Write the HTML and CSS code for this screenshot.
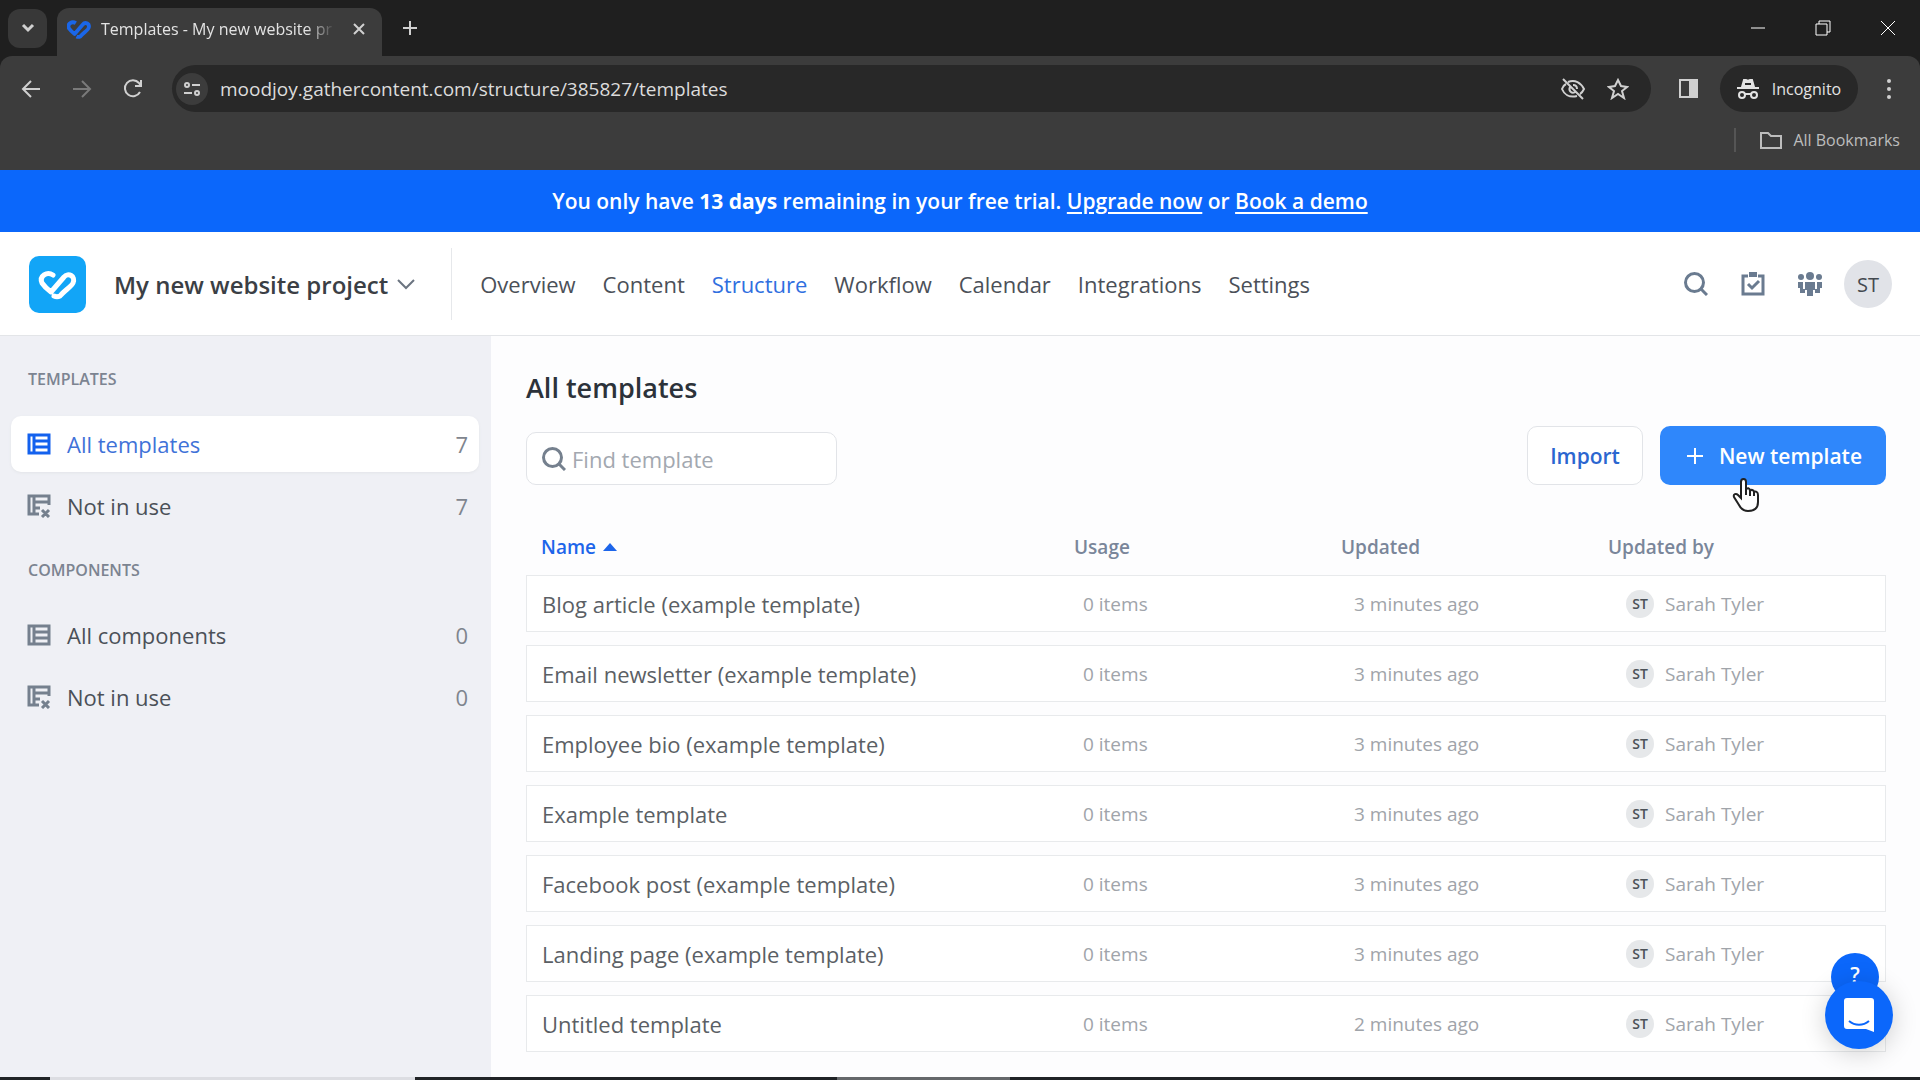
FILE: index.html
```html
<!DOCTYPE html>
<html lang="en">
<head>
<meta charset="utf-8">
<title>Templates - My new website project</title>
<link rel="stylesheet" href="styles.css">
</head>
<body>
<svg class="defs" aria-hidden="true">
  <symbol id="heart" viewBox="0 0 57 57"><path d="M24 19C18 15 10 20 13 27C15 30 18 33 22 36L35 21C39 16 47 20 44 27C43 30 35 35 31 40C29 41 27 41 25 40"/></symbol>
  <symbol id="search" viewBox="0 0 24 24"><circle cx="10.500" cy="10.500" r="9"/><path d="M17 17l6 6"/></symbol>
  <symbol id="list" viewBox="0 0 24 22"><path d="M2 2h20v18H2zM7 2v18M7 8h15M7 14h15"/></symbol>
  <symbol id="unused" viewBox="0 0 24 24"><path d="M22 11V2H2v18h10M7 2v18M7 8h15M7 14h6M15 16l7 7M22 16l-7 7"/></symbol>
</svg>

<header class="browser">
  <div class="tabstrip">
    <button class="tab-search" aria-label="Search tabs"><svg width="14" height="10" viewBox="0 0 14 10"><path d="M2 2l5 5 5-5"/></svg></button>
    <div class="tab">
      <svg class="favicon" viewBox="10 14 38 30"><use href="#heart" width="57" height="57"/></svg>
      <span class="tab-title">Templates - My new website pr</span>
      <button class="tab-close" aria-label="Close tab"><svg width="14" height="14" viewBox="0 0 14 14"><path d="M2 2l10 10M12 2L2 12"/></svg></button>
    </div>
    <button class="tab-new" aria-label="New tab"><svg width="16" height="16" viewBox="0 0 16 16"><path d="M8 1v14M1 8h14"/></svg></button>
    <div class="window-controls">
      <button aria-label="Minimize"><svg width="16" height="16" viewBox="0 0 16 16"><path d="M1 8h14"/></svg></button>
      <button aria-label="Restore"><svg width="16" height="16" viewBox="0 0 16 16"><path d="M1 4h11v11H1zM4 4V1h11v11h-3"/></svg></button>
      <button aria-label="Close"><svg width="16" height="16" viewBox="0 0 16 16"><path d="M1 1l14 14M15 1L1 15"/></svg></button>
    </div>
  </div>
  <div class="toolbar">
    <button class="tool" aria-label="Back"><svg width="20" height="18" viewBox="0 0 20 18"><path d="M19 9H3M10 1L2 9l8 8"/></svg></button>
    <button class="tool dim" aria-label="Forward"><svg width="20" height="18" viewBox="0 0 20 18"><path d="M1 9h16M10 1l8 8-8 8"/></svg></button>
    <button class="tool" aria-label="Reload"><svg width="20" height="20" viewBox="0 0 20 20"><path d="M17 13a8 8 0 1 1-1-9l2 3M18 1v6h-6"/></svg></button>
    <div class="omnibox">
      <button class="site-info" aria-label="Site information"><svg width="18" height="16" viewBox="0 0 18 16"><circle cx="4" cy="4" r="2"/><path d="M9 4h8M1 12h8"/><circle cx="14" cy="12" r="2"/></svg></button>
      <input class="url" type="text" aria-label="Address" value="moodjoy.gathercontent.com/structure/385827/templates">
      <button class="omni-icon" aria-label="Third-party cookies blocked"><svg width="26" height="22" viewBox="0 0 26 22"><path d="M8 4c7-3 13 1 16 7-1 2-2 4-4 5M17 18C9 20 4 16 2 11c1-3 2-4 4-5M3 1l20 20M10 9c-2 4 2 7 5 5M13 7c3 0 4 2 4 4"/></svg></button>
      <button class="omni-icon" aria-label="Bookmark this tab"><svg width="22" height="22" viewBox="0 0 22 22"><path d="M11 2l3 6 6 1-5 4 2 7-6-4-6 4 2-7-5-4 6-1z"/></svg></button>
    </div>
    <button class="tool panel" aria-label="Side panel"><svg width="21" height="21" viewBox="0 0 21 21"><path d="M2 2h17v17H2z"/><path d="M12 2h7v17h-7z" fill="currentColor"/></svg></button>
    <button class="incognito"><svg width="22" height="20" viewBox="0 0 22 20"><path d="M0 9h22M8 15h6"/><path d="M5 8l2-7h2l2 1 2-1h2l2 7z"/><circle cx="5" cy="16" r="3"/><circle cx="17" cy="16" r="3"/><path d="M8 5h6" class="band"/></svg>Incognito</button>
    <button class="menu" aria-label="Menu"><svg width="6" height="22" viewBox="0 0 6 22"><circle cx="3" cy="3" r="2"/><circle cx="3" cy="11" r="2"/><circle cx="3" cy="19" r="2"/></svg></button>
  </div>
  <div class="bookmarks">
    <button class="all-bookmarks"><svg width="24" height="19" viewBox="0 0 24 19"><path d="M2 2h7l3 3h10v12H2z"/></svg>All Bookmarks</button>
  </div>
</header>

<div class="trial">You only have <b>13 days</b> remaining in your free trial. <a href="#upgrade">Upgrade now</a> or <a href="#demo">Book a demo</a></div>

<header class="app-header">
  <a class="logo" href="#home" aria-label="Home"><svg><use href="#heart"/></svg></a>
  <button class="project">My new website project<svg width="18" height="12" viewBox="0 0 18 12"><path d="M1 2l8 8 8-8"/></svg></button>
  <nav class="nav">
    <a href="#overview">Overview</a><a href="#content">Content</a><a class="current" href="#structure">Structure</a><a href="#workflow">Workflow</a><a href="#calendar">Calendar</a><a href="#integrations">Integrations</a><a href="#settings">Settings</a>
  </nav>
  <div class="header-tools">
    <button aria-label="Search"><svg class="ico-line"><use href="#search"/></svg></button>
    <button aria-label="Tasks"><svg class="ico-line" viewBox="0 0 24 24"><path d="M7 4H2v18h20V4h-5M7 12l4 4 7-7"/><path class="solid" d="M8 0h8v5H8z"/></svg></button>
    <button aria-label="People"><svg class="ico-fill" viewBox="0 0 24 24"><circle cx="12" cy="4" r="4"/><circle cx="3" cy="5" r="3"/><circle cx="21" cy="5" r="3"/><path d="M7 10h10v8h-2v6H9v-6H7zM0 10h5v7h2v4H2v-5H0zM24 10h-5v7h-2v4h5v-5h2z"/></svg></button>
    <button class="avatar-lg" aria-label="Account">ST</button>
  </div>
</header>

<div class="app">
  <aside class="sidebar">
    <h2>Templates</h2>
    <a class="item active" href="#all"><svg><use href="#list"/></svg>All templates<span>7</span></a>
    <a class="item" href="#unused-templates"><svg><use href="#unused"/></svg>Not in use<span>7</span></a>
    <h2 class="second">Components</h2>
    <a class="item" href="#components"><svg><use href="#list"/></svg>All components<span>0</span></a>
    <a class="item" href="#unused-components"><svg><use href="#unused"/></svg>Not in use<span>0</span></a>
  </aside>

  <main class="main">
    <h1>All templates</h1>
    <div class="actions">
      <label class="find"><svg><use href="#search"/></svg><input type="text" aria-label="Find template" placeholder="Find template"></label>
      <button class="import">Import</button>
      <button class="new"><svg width="18" height="18" viewBox="0 0 18 18"><path d="M9 1v16M1 9h16"/></svg>New template
        <svg class="pointer" width="28" height="36" viewBox="0 0 28 36"><path d="M9 20V4c0-4 5-4 5 0v8c1-3 4-2 4 1 1-2 4-1 4 1 2-1 4 0 4 3v7c0 6-4 9-10 9-5 0-7-2-9-6l-5-8c-1-3 2-4 4-2z"/><path d="M14 12v5M18 13v5M22 14v4"/></svg>
      </button>
    </div>
    <table class="templates">
      <thead><tr><th class="c-name sorted"><button>Name<i></i></button></th><th class="c-usage">Usage</th><th class="c-updated">Updated</th><th class="c-by">Updated by</th></tr></thead>
      <tbody>
        <tr><td><a href="#t1">Blog article (example template)</a></td><td>0 items</td><td>3 minutes ago</td><td><span class="avatar">ST</span>Sarah Tyler</td></tr>
        <tr><td><a href="#t2">Email newsletter (example template)</a></td><td>0 items</td><td>3 minutes ago</td><td><span class="avatar">ST</span>Sarah Tyler</td></tr>
        <tr><td><a href="#t3">Employee bio (example template)</a></td><td>0 items</td><td>3 minutes ago</td><td><span class="avatar">ST</span>Sarah Tyler</td></tr>
        <tr><td><a href="#t4">Example template</a></td><td>0 items</td><td>3 minutes ago</td><td><span class="avatar">ST</span>Sarah Tyler</td></tr>
        <tr><td><a href="#t5">Facebook post (example template)</a></td><td>0 items</td><td>3 minutes ago</td><td><span class="avatar">ST</span>Sarah Tyler</td></tr>
        <tr><td><a href="#t6">Landing page (example template)</a></td><td>0 items</td><td>3 minutes ago</td><td><span class="avatar">ST</span>Sarah Tyler</td></tr>
        <tr><td><a href="#t7">Untitled template</a></td><td>0 items</td><td>2 minutes ago</td><td><span class="avatar">ST</span>Sarah Tyler</td></tr>
      </tbody>
    </table>
  </main>
</div>

<footer class="taskbar"><span class="light"></span><span class="grey"></span></footer>

<div class="help">
  <button class="help-small" aria-label="Help">?</button>
  <button class="help-chat" aria-label="Open chat"><svg width="32" height="36" viewBox="0 0 32 36"><path class="bubble" d="M4 1h24a3 3 0 0 1 3 3v31l-8-3H4a3 3 0 0 1-3-3V4a3 3 0 0 1 3-3z"/><path class="smile" d="M6 24c6 5 14 5 20 0"/></svg></button>
</div>
</body>
</html>
```
FILE: styles.css
```css
* { box-sizing: border-box; }
body {
  margin: 0;
  min-height: 100vh;
  display: flex;
  flex-direction: column;
  background: #fdfdfe;
  font-family: "Open Sans", sans-serif;
  color: #4b5058;
}
button, input { font: inherit; color: inherit; border: 0; background: none; padding: 0; margin: 0; }
button { display: flex; align-items: center; justify-content: center; }
a { color: inherit; text-decoration: none; }
h1, h2 { margin: 0; }
svg { display: block; flex: none; fill: none; stroke: currentColor; stroke-width: 2; }
.defs { position: absolute; width: 0; height: 0; }

/* Browser window */
.browser { background: #1f1f1f; color: #d0d0d0; }
.tabstrip { display: flex; align-items: center; height: 56px; padding-left: 8px; }
.tab-search { width: 39px; height: 39px; border-radius: 12px; background: #383838; }
.tab-search svg { stroke-width: 3; }
.tab {
  display: flex; align-items: center; align-self: flex-end;
  width: 325px; height: 48px; margin-left: 10px; padding: 0 9px 6px 10px;
  border-radius: 12px 12px 0 0; background: #3c3c3c;
}
.favicon { width: 24px; height: 19px; color: #1a66e8; stroke-width: 6; stroke-linejoin: round; }
.tab-title {
  flex: 1; margin-left: 10px; white-space: nowrap;
  font-size: 16px; line-height: 24px; color: #e3e3e3;
  -webkit-mask-image: linear-gradient(to right, #000 88%, transparent);
  mask-image: linear-gradient(to right, #000 88%, transparent);
}
.tab-close { width: 28px; height: 28px; margin-left: 10px; }
.tab-new { width: 40px; height: 40px; margin-left: 8px; }
.window-controls { display: flex; margin-left: auto; }
.window-controls button { width: 65px; height: 56px; color: #fff; }
.window-controls svg { stroke-width: 1; }
.toolbar {
  display: flex; align-items: center; height: 65px; padding-left: 5px;
  background: #3c3c3c; border-radius: 12px 12px 0 0;
}
.tool { width: 51px; height: 40px; }
.dim { color: #7a7a7a; }
.omnibox {
  flex: 1; display: flex; align-items: center; height: 47px;
  margin-left: 14px; padding: 0 20px 0 4px; border-radius: 24px; background: #282828;
}
.site-info { width: 32px; height: 32px; border-radius: 50%; background: #3c3c3c; }
.url { flex: 1; min-width: 0; margin-left: 12px; font-size: 19px; color: #dcdcdc; }
.omni-icon { width: 45px; height: 40px; }
.omni-icon:last-child { width: 26px; margin-left: 10px; }
.panel { margin: 0 6px 0 12px; }
.incognito { gap: 13px; width: 138px; height: 47px; border-radius: 24px; background: #282828; font-size: 16px; color: #e3e3e3; }
.incognito path:nth-of-type(2) { fill: currentColor; }
.incognito .band { stroke: #282828; }
.menu { width: 62px; height: 40px; }
.menu svg { fill: currentColor; stroke: none; }
.bookmarks { display: flex; justify-content: flex-end; height: 49px; padding: 7px 20px 0 0; background: #3c3c3c; }
.all-bookmarks { gap: 10px; height: 24px; padding-left: 23px; border-left: 2px solid #555; font-size: 16px; color: #bdbdbd; }

/* Trial banner */
.trial {
  padding: 16px 24px; background: #0b67fb; color: #fff;
  font-size: 21px; line-height: 30px; font-weight: 600; text-align: center;
}
.trial b { font-weight: 700; }
.trial a { text-decoration: underline; text-underline-offset: 3px; }

/* Application header */
.app-header { display: flex; align-items: center; padding: 16px 28px 15px 29px; background: #fff; border-bottom: 1px solid #e3e5e8; }
.logo { display: block; border-radius: 10px; background: #12a5f7; color: #fff; }
.logo svg { width: 57px; height: 57px; stroke-width: 5; stroke-linecap: round; stroke-linejoin: round; }
.project { gap: 9px; margin-left: 28px; font-size: 24px; font-weight: 600; color: #3b3f45; white-space: nowrap; }
.project svg { color: #6b7480; }
.nav { display: flex; align-items: center; gap: 27px; height: 72px; margin-left: 36px; padding-left: 28px; border-left: 1px solid #e6e8eb; font-size: 22px; line-height: 30px; }
.current { color: #2f6fdf; }
.header-tools { display: flex; align-items: center; gap: 33px; margin-left: auto; color: #6a7b90; }
.ico-line, .ico-fill { width: 24px; height: 24px; }
.ico-line { stroke-width: 3; }
.ico-fill, .solid { fill: currentColor; stroke: none; }
.avatar-lg { width: 48px; height: 48px; margin-left: -11px; border-radius: 50%; background: #e1e3e8; font-size: 20px; color: #43494f; }

/* Sidebar */
.app { flex: 1; display: flex; }
.sidebar { display: flex; flex-direction: column; width: 491px; flex: none; padding: 33px 12px 0 11px; background: #eff0f5; }
.sidebar h2 { margin: 0 0 27px 17px; font-size: 16px; line-height: 20px; font-weight: 600; color: #7c8491; text-transform: uppercase; }
.sidebar .second { margin-top: 26px; }
.item { display: flex; align-items: center; height: 56px; padding: 0 11px 0 16px; border-radius: 10px; font-size: 22px; }
.item + .item { margin-top: 6px; }
.item svg { width: 24px; height: 24px; margin-right: 16px; color: #75808e; stroke-width: 3; }
.item span { margin-left: auto; color: #7f858e; }
.active { background: #fff; color: #3f72d8; box-shadow: 0 1px 3px #e3e4e8; }
.active svg { color: #1361ee; }

/* Template list */
.main { flex: 1; min-width: 0; padding: 34px 34px 10px 35px; }
h1 { font-size: 27px; line-height: 36px; font-weight: 600; color: #2c323a; }
.actions { display: flex; align-items: flex-end; margin-top: 20px; }
.find { display: flex; align-items: center; gap: 6px; width: 311px; height: 53px; margin-right: auto; padding: 0 15px; border: 1px solid #e2e4e8; border-radius: 10px; background: #fff; font-size: 22px; }
.find svg { width: 24px; height: 24px; stroke-width: 3; color: #75808e; }
.find input { width: 100%; min-width: 0; }
.find input::placeholder { color: #a3a8b0; opacity: 1; }
.import, .new { height: 59px; border-radius: 10px; font-size: 21px; font-weight: 600; }
.import { padding: 0 22px; border: 1px solid #e2e4e8; background: #fff; color: #2b66d0; }
.new { position: relative; gap: 15px; margin-left: 17px; padding: 0 24px 0 26px; background: #2f87fb; color: #fff; }
.pointer { position: absolute; left: 72px; top: 52px; fill: #fff; stroke: #222; }
.templates { width: 100%; margin-top: 34px; border-collapse: separate; border-spacing: 0 13px; table-layout: fixed; font-size: 19px; line-height: 30px; text-align: left; }
.templates th { height: 30px; padding: 0 0 0 15px; font-weight: 600; color: #7a869a; }
.c-usage, .c-updated { width: 267px; }
.c-by { width: 293px; }
.sorted button { gap: 7px; color: #1d65ea; }
.sorted i { border: 7px solid transparent; border-top: 0; border-bottom: 8px solid #1d65ea; }
.templates td { height: 57px; padding: 0; border: solid #e8eaec; border-width: 1px 0; background: #fff; color: #a0a4aa; }
.templates td:first-child { padding-left: 15px; border-left-width: 1px; font-size: 22px; color: #5b5f65; }
.templates td:nth-child(2) { padding-left: 24px; }
.templates td:nth-child(3) { padding-left: 28px; }
.templates td:last-child { padding-left: 33px; border-right-width: 1px; }
.avatar { display: inline-block; width: 28px; height: 28px; margin: 1px 11px 1px 0; border-radius: 50%; background: #e6e8ea; font-size: 14px; line-height: 28px; font-weight: 600; text-align: center; vertical-align: top; color: #4b5157; }

/* Taskbar edge */
.taskbar { display: flex; height: 3px; background: #202326; }
.light { width: 19%; margin-left: 50px; background: #dcdde2; }
.grey { width: 9%; margin-left: 22%; background: #65686b; }

/* Help launcher */
.help { position: fixed; right: 27px; bottom: 31px; display: flex; flex-direction: column; align-items: center; color: #fff; }
.help-small { width: 48px; height: 48px; margin: 0 8px -20px 0; padding-bottom: 4px; border-radius: 50%; background: #0b67fb; font-size: 21px; font-weight: 600; }
.help-chat { width: 68px; height: 68px; border-radius: 50%; background: #0b67fb; box-shadow: 0 4px 26px #00000030; }
.bubble { fill: #fff; stroke: none; }
.smile { stroke: #0b67fb; }
```
